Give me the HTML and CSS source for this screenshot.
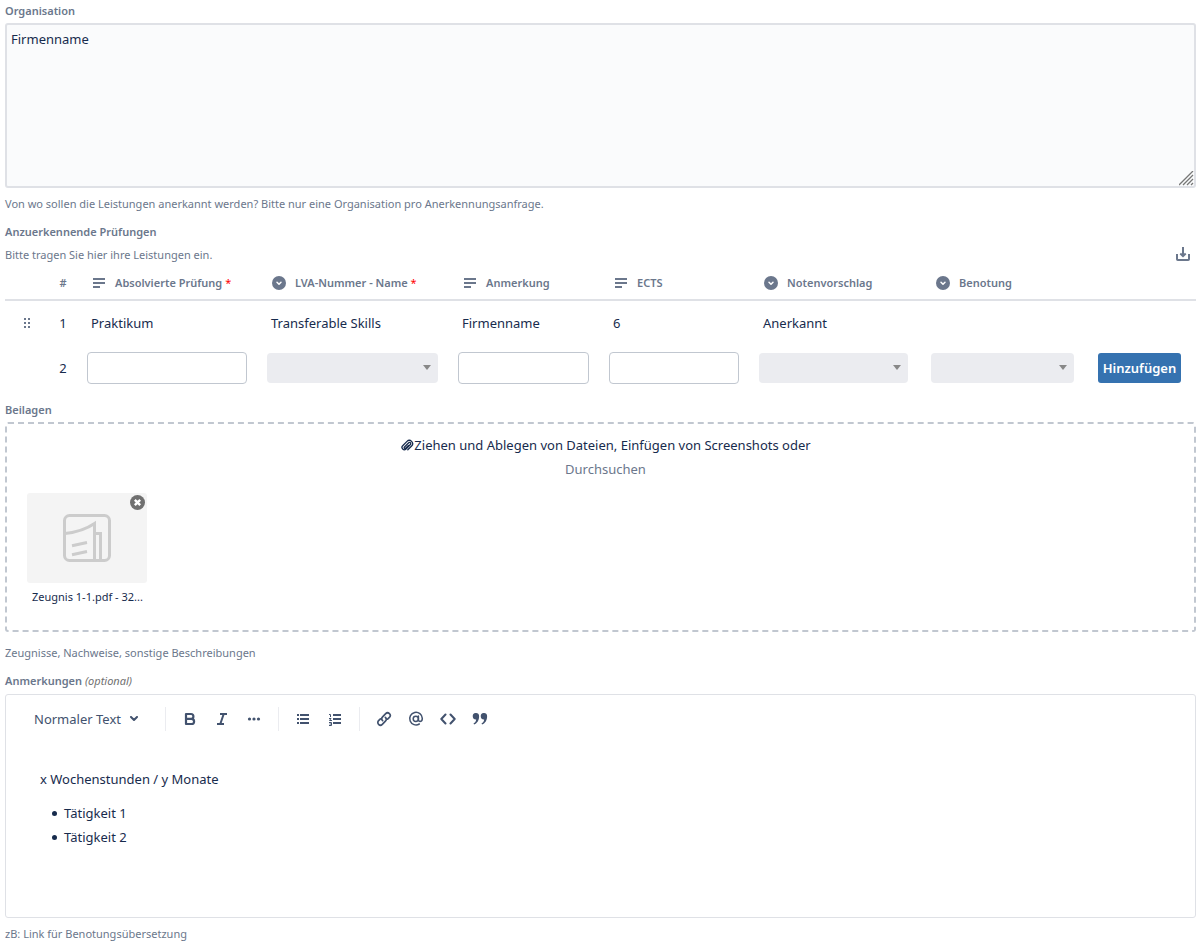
FILE: index.html
```html
<!DOCTYPE html>
<html lang="de">
<head>
  <meta charset="UTF-8">
  <meta name="viewport" content="width=device-width, initial-scale=1.0">
  <title>Anerkennung</title>
  <link rel="stylesheet" href="styles.css">
</head>
<body>
  <!-- Shared icons -->
  <svg class="sprite" aria-hidden="true">
    <symbol id="icon-text" viewBox="0 0 12 10">
      <path d="M0 1h12M0 5h12M0 9h7" stroke="currentColor" stroke-width="2"/>
    </symbol>
    <symbol id="icon-select" viewBox="0 0 14 14">
      <circle cx="7" cy="7" r="7" fill="currentColor"/>
      <path d="M5 6.3l2 2 2-2" fill="none" stroke="#fff" stroke-width="1.5" stroke-linecap="round" stroke-linejoin="round"/>
    </symbol>
  </svg>

  <form class="request-form">
    <!-- Organisation -->
    <div class="field">
      <label class="field-label" for="organisation">Organisation</label>
      <textarea id="organisation" class="organisation">Firmenname</textarea>
      <p class="help">Von wo sollen die Leistungen anerkannt werden? Bitte nur eine Organisation pro Anerkennungsanfrage.</p>
    </div>

    <!-- Exams -->
    <div class="field">
      <h2 class="field-label">Anzuerkennende Prüfungen</h2>
      <div class="table-bar">
        <p>Bitte tragen Sie hier ihre Leistungen ein.</p>
        <button type="button" class="icon-button" aria-label="Herunterladen">
          <svg width="14" height="14" viewBox="0 0 14 14" fill="none" stroke="currentColor" stroke-width="2"><path d="M1 7v5.200q0 .8.8.8h10.400q.8 0 .8-.8V7M7 0v9M4.300 6.500L7 9.200l2.700-2.700"/></svg>
        </button>
      </div>
      <table class="exams">
        <colgroup>
          <col class="col-drag"><col class="col-number"><col class="col-exam"><col class="col-course"><col class="col-note"><col class="col-ects"><col class="col-proposal"><col class="col-grade"><col class="col-action">
        </colgroup>
        <thead>
          <tr>
            <th></th>
            <th class="number">#</th>
            <th><div class="heading"><svg class="icon-text"><use href="#icon-text"/></svg><span>Absolvierte Prüfung <span class="required">*</span></span></div></th>
            <th><div class="heading"><svg class="icon-select"><use href="#icon-select"/></svg><span>LVA-Nummer - Name <span class="required">*</span></span></div></th>
            <th><div class="heading"><svg class="icon-text"><use href="#icon-text"/></svg><span>Anmerkung</span></div></th>
            <th><div class="heading"><svg class="icon-text"><use href="#icon-text"/></svg><span>ECTS</span></div></th>
            <th><div class="heading"><svg class="icon-select"><use href="#icon-select"/></svg><span>Notenvorschlag</span></div></th>
            <th><div class="heading"><svg class="icon-select"><use href="#icon-select"/></svg><span>Benotung</span></div></th>
            <th></th>
          </tr>
        </thead>
        <tbody>
          <tr>
            <td class="drag"><svg width="8" height="12" viewBox="0 0 8 12" fill="currentColor"><path d="M1 1h2v2H1zM5 1h2v2H5zM1 5h2v2H1zM5 5h2v2H5zM1 9h2v2H1zM5 9h2v2H5z"/></svg></td>
            <td class="number">1</td>
            <td class="value">Praktikum</td>
            <td class="value">Transferable Skills</td>
            <td class="value">Firmenname</td>
            <td class="value">6</td>
            <td class="value">Anerkannt</td>
            <td></td>
            <td></td>
          </tr>
          <tr>
            <td></td>
            <td class="number">2</td>
            <td><input type="text" aria-label="Absolvierte Prüfung"></td>
            <td><select aria-label="LVA-Nummer - Name"><option></option></select></td>
            <td><input type="text" aria-label="Anmerkung"></td>
            <td><input type="text" aria-label="ECTS"></td>
            <td class="proposal"><select aria-label="Notenvorschlag"><option></option></select></td>
            <td><select aria-label="Benotung"><option></option></select></td>
            <td class="action"><button type="button" class="add-button">Hinzufügen</button></td>
          </tr>
        </tbody>
      </table>
    </div>

    <!-- Attachments -->
    <div class="field">
      <h2 class="field-label">Beilagen</h2>
      <div class="dropzone">
        <div class="drop-text">
          <div class="drop-line">
            <svg width="14" height="14" viewBox="0 0 14 14" fill="none" stroke="currentColor" stroke-width="1.3" stroke-linecap="round"><path d="M4.500 9l4.200-4.200a1.200 1.200 0 0 1 1.700 1.700L6 11a2.300 2.300 0 0 1-3.300-3.300L7 3.400a3.200 3.200 0 0 1 4.600 4.600L7.800 11.800M4.500 9a.8.8 0 0 0 1.200 1.200L8.500 7.400"/></svg>
            <span>Ziehen und Ablegen von Dateien, Einfügen von Screenshots oder</span>
          </div>
          <button type="button" class="browse">Durchsuchen</button>
        </div>
        <div class="file">
          <div class="thumb">
            <svg width="48" height="48" viewBox="0 0 48 48" fill="none" stroke="#ccc" stroke-width="3"><rect x="1.500" y="1.500" width="45" height="45" rx="5"/><path d="M2 19.500Q20 17.500 31.500 9.500V46M32 19.500h5.500V46M9 31.800l15-3.300M9 40.800l15-3.300"/></svg>
            <button type="button" class="remove" aria-label="Datei entfernen">
              <svg width="15" height="15" viewBox="0 0 14 14"><circle cx="7" cy="7" r="7" fill="#707070"/><path d="M4.500 4.500l5 5M9.500 4.500l-5 5" stroke="#fff" stroke-width="2.200"/></svg>
            </button>
          </div>
          <div class="file-name">Zeugnis 1-1.pdf - 32...</div>
        </div>
      </div>
      <p class="help">Zeugnisse, Nachweise, sonstige Beschreibungen</p>
    </div>

    <!-- Notes -->
    <div class="field">
      <h2 class="field-label">Anmerkungen <i class="optional">(optional)</i></h2>
      <div class="editor">
        <div class="toolbar">
          <button type="button" class="text-style">Normaler Text
            <svg width="10" height="6" viewBox="0 0 10 6" fill="none" stroke="currentColor" stroke-width="2" stroke-linecap="round" stroke-linejoin="round"><path d="M2 1l3 3 3-3"/></svg>
          </button>
          <div class="tools">
            <button type="button" aria-label="Fett"><svg width="16" height="16" viewBox="0 0 16 16" fill="none" stroke="currentColor" stroke-width="2.200" stroke-linejoin="round"><path d="M4 3h5a2.400 2.400 0 0 1 0 4.800H4zM4 7.800h5.500a2.600 2.600 0 0 1 0 5.200H4z"/></svg></button>
            <button type="button" aria-label="Kursiv"><svg width="16" height="16" viewBox="0 0 16 16" fill="none" stroke="currentColor" stroke-width="2"><path d="M6 3h7M3 13h7M9.700 3L6.300 13"/></svg></button>
            <button type="button" aria-label="Mehr"><svg width="16" height="16" viewBox="0 0 16 16" fill="currentColor"><circle cx="3.500" cy="8" r="1.600"/><circle cx="8" cy="8" r="1.600"/><circle cx="12.500" cy="8" r="1.600"/></svg></button>
          </div>
          <div class="tools">
            <button type="button" aria-label="Aufzählung"><svg width="16" height="16" viewBox="0 0 16 16" stroke="currentColor" stroke-width="2"><path d="M2 4h2M2 8h2M2 12h2M5 4h9M5 8h9M5 12h9"/></svg></button>
            <button type="button" aria-label="Nummerierte Liste"><svg width="16" height="16" viewBox="0 0 16 16" fill="none" stroke="currentColor"><path stroke-width="2" d="M6 4h8M6 8h8M6 12h8"/><path d="M2 3.500h1.500V6M2 7.500h2L2.500 9.500H5M2 11.500h2.500v3H2M2.500 13h2"/></svg></button>
          </div>
          <div class="tools">
            <button type="button" aria-label="Link"><svg width="16" height="16" viewBox="0 0 16 16" fill="none" stroke="currentColor" stroke-width="1.700" stroke-linecap="round"><path d="M6.600 9.600a2.700 2.700 0 0 1 0-3.800l3.100-3.100a2.600 2.600 0 0 1 3.700 3.700L11.600 8.200M9.400 6.400a2.700 2.700 0 0 1 0 3.800l-3.100 3.100a2.600 2.600 0 0 1-3.700-3.700L4.400 7.800"/></svg></button>
            <button type="button" aria-label="Erwähnung"><svg width="16" height="16" viewBox="0 0 16 16" fill="none" stroke="currentColor" stroke-width="1.500" stroke-linecap="round"><circle cx="7.800" cy="7.800" r="2.600"/><path d="M10.400 5v3.600q0 1.800 1.500 1.800 2.400 0 2.400-3A6.300 6.300 0 1 0 11.300 13"/></svg></button>
            <button type="button" aria-label="Code"><svg width="16" height="16" viewBox="0 0 16 16" fill="none" stroke="currentColor" stroke-width="2" stroke-linecap="round" stroke-linejoin="round"><path d="M5.500 3.500L1.300 8l4.200 4.500M10.500 3.500L14.700 8l-4.200 4.500"/></svg></button>
            <button type="button" aria-label="Zitat"><svg width="16" height="16" viewBox="0 0 16 16" fill="currentColor"><path id="quote" d="M3.700 2a3 3 0 0 1 3.400 3.400c0 4-2.200 7-5 8.100l-.6-1c1.500-.9 2.500-2.300 2.700-4.100A3.200 3.200 0 1 1 3.700 2z"/><use href="#quote" x="8"/></svg></button>
          </div>
        </div>
        <div class="editor-content" contenteditable="true" role="textbox" aria-label="Anmerkungen" spellcheck="false">
          <p>x Wochenstunden / y Monate</p>
          <ul>
            <li>Tätigkeit 1</li>
            <li>Tätigkeit 2</li>
          </ul>
        </div>
      </div>
      <p class="help">zB: Link für Benotungsübersetzung</p>
    </div>
  </form>
</body>
</html>
```
FILE: styles.css
```css
/* General Styles */
* {
  box-sizing: border-box;
}

body {
  margin: 0;
  padding: 3px 7px 0 5px;
  background-color: #fff;
  color: #172b4d;
  font-family: "Noto Sans", sans-serif;
  font-size: 13px;
  line-height: 24px;
}

p, h2 {
  margin: 0;
}

input, textarea, select, button {
  font: inherit;
  color: inherit;
}

button {
  padding: 0;
  border: none;
  background: none;
  cursor: pointer;
}

svg {
  display: block;
  flex: none;
}

.sprite {
  display: none;
}

/* Fields */
.field {
  margin-bottom: 12px;
}

.field:last-child {
  margin-bottom: 0;
}

.field-label {
  display: block;
  margin-bottom: 4px;
  color: #6b778c;
  font-size: 11px;
  font-weight: 600;
  line-height: 16px;
}

.help, .table-bar {
  color: #6b778c;
  font-size: 11px;
  line-height: 16px;
}

.help {
  margin-top: 8px;
}

.optional {
  color: #707070;
  font-weight: 400;
}

.organisation {
  display: block;
  width: 100%;
  height: 165px;
  padding: 2px 4px;
  border: 2px solid #dfe1e6;
  border-radius: 3px;
  background-color: #fafbfc;
  line-height: 24px;
  resize: vertical;
}

.organisation::-webkit-resizer {
  background: url("data:image/svg+xml,%3Csvg xmlns='http://www.w3.org/2000/svg' width='15' height='15'%3E%3Cpath d='M0 14L14 0M4 14L14 4M8 14l6-6M12 14l2-2' stroke='%23777' stroke-width='1.300'/%3E%3C/svg%3E") no-repeat right bottom;
}

/* Exams table */
.table-bar {
  display: flex;
  justify-content: space-between;
  align-items: flex-start;
  padding-top: 3px;
}

.table-bar p {
  margin-bottom: 1px;
}

.icon-button {
  margin-right: 6px;
  color: #6b778c;
}

.exams {
  width: 100%;
  table-layout: fixed;
  border-collapse: collapse;
}

.col-drag { width: 41px; }
.col-number { width: 31px; }
.col-exam { width: 180px; }
.col-course { width: 191px; }
.col-note { width: 151px; }
.col-ects { width: 150px; }
.col-proposal { width: 172px; }
.col-grade { width: 163px; }
.col-action { width: 112px; }

.exams th {
  height: 36px;
  padding: 2px 10px 0;
  border-bottom: 2px solid #dfe1e6;
  color: #6b778c;
  font-size: 11px;
  font-weight: 600;
  line-height: 16px;
  text-align: left;
}

.exams td {
  height: 45px;
  padding: 0 10px;
}

.exams .number {
  padding-right: 0;
  padding-left: 3px;
  text-align: center;
}

.exams .value {
  padding-left: 14px;
}

.exams .drag {
  padding: 0 18px;
  color: #6b778c;
}

.exams .proposal {
  padding-right: 13px;
}

.exams .action {
  padding: 0 10px 0 14px;
}

.heading {
  display: flex;
  align-items: center;
  gap: 9px;
  padding-left: 5px;
  white-space: nowrap;
}

.icon-text {
  width: 14px;
  height: 10px;
}

.icon-select {
  width: 14px;
  height: 14px;
}

.required {
  color: #f00;
  font-weight: 400;
}

.exams input, .exams select {
  display: block;
  width: 100%;
  height: 32px;
  padding: 0 4px;
  border: 1px solid #c1c7d0;
  border-radius: 4px;
  background-color: #fff;
}

.exams select {
  height: 30px;
  border: none;
  background: #ebecf0 url("data:image/svg+xml,%3Csvg xmlns='http://www.w3.org/2000/svg' width='8' height='5'%3E%3Cpath d='M0 0h8L4 5z' fill='%23888'/%3E%3C/svg%3E") no-repeat right 7px center;
  appearance: none;
}

.add-button {
  display: block;
  width: 83px;
  height: 30px;
  border-radius: 3px;
  background-color: #3572b0;
  color: #fff;
  font-weight: 600;
}

/* Attachments */
.dropzone {
  min-height: 210px;
  margin-bottom: 13px;
  padding: 9px 20px;
  border: 2px dashed #c1c7d0;
  border-radius: 3px;
}

.drop-text {
  padding-left: 10px;
}

.drop-line {
  display: flex;
  justify-content: center;
  align-items: center;
}

.browse {
  display: block;
  margin: 0 auto;
  color: #6b778c;
}

.file {
  width: 120px;
  margin-top: 12px;
}

.thumb {
  position: relative;
  display: flex;
  justify-content: center;
  align-items: center;
  height: 90px;
  border-radius: 3px;
  background-color: #f4f4f4;
}

.remove {
  position: absolute;
  top: 2px;
  right: 2px;
}

.file-name {
  padding: 2px 0 0 5px;
  font-size: 11px;
  white-space: nowrap;
}

/* Editor */
.editor {
  min-height: 224px;
  margin-top: 5px;
  border: 1px solid #dfe1e6;
  border-radius: 3px;
}

.toolbar {
  display: flex;
  align-items: center;
  height: 48px;
  padding-left: 28px;
  color: #42526e;
}

.text-style {
  display: flex;
  align-items: center;
  gap: 8px;
  margin-right: 26px;
}

.tools {
  display: flex;
  align-items: center;
  gap: 16px;
  height: 24px;
  padding: 0 16px;
  border-left: 1px solid #ebecf0;
}

.editor-content {
  padding: 24px 34px;
  outline: none;
}

.editor-content ul {
  margin: 10px 0 0;
  padding-left: 12px;
  list-style: none;
}

.editor-content li {
  display: flex;
  align-items: center;
  gap: 7px;
}

.editor-content li::before {
  content: "";
  width: 5px;
  height: 5px;
  border-radius: 50%;
  background-color: #172b4d;
}
```
